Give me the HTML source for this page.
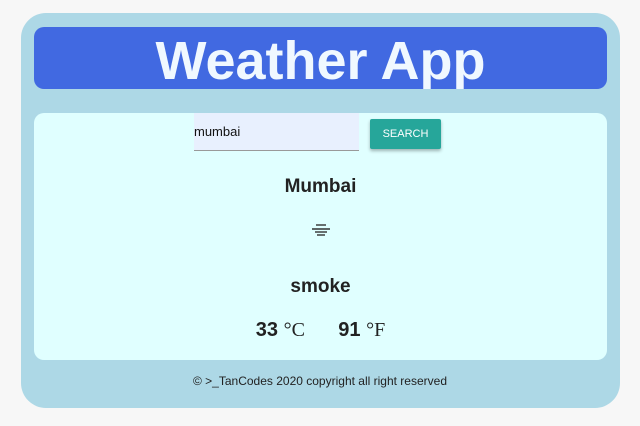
<html><head><style>
body{margin:0;background:#f7f7f7;width:640px;height:426px;position:relative;font-family:"Liberation Sans",sans-serif}
.o{position:absolute;left:21px;top:13px;width:599px;height:395px;background:#add8e6;border-radius:25px}
.h{position:absolute;left:34px;top:27px;width:573px;height:62px;background:#4169e1;border-radius:10px;color:#f0f8ff;font-weight:bold;font-size:54px;text-align:center;line-height:68px;overflow:hidden}
.c{position:absolute;left:34px;top:113px;width:573px;height:247px;background:#e0ffff;border-radius:10px}
.in{position:absolute;left:160px;top:0;width:165px;height:37px;background:#e8f0fe;border-bottom:1px solid #999;font-size:13px;line-height:38px;color:#111}
.b{position:absolute;left:336px;top:6px;width:71px;height:30px;background:#26a69a;color:#fff;font-size:11px;text-align:center;line-height:30px;box-shadow:0 2px 3px rgba(0,0,0,.3);border-radius:2px}
.t{position:absolute;left:0;width:573px;text-align:center;font-weight:bold;color:#222}
.s{font-family:"Liberation Serif",serif;font-weight:normal;font-size:20px}
.f{position:absolute;left:0;top:374px;width:640px;text-align:center;font-size:12px;color:#222}
</style></head><body>
<div class="o"></div>
<div class="h">Weather App</div>
<div class="c">
<div class="in">mumbai</div>
<div class="b">SEARCH</div>
<div class="t" style="top:63px;font-size:19px">Mumbai</div>
<div class="t" style="top:110px;font-size:18px">
<svg width="22" height="14" viewBox="0 0 22 14"><g stroke="#333" stroke-width="1.4"><line x1="6" y1="2" x2="16" y2="2"/><line x1="2" y1="6" x2="20" y2="6"/><line x1="5" y1="9" x2="17" y2="9"/><line x1="7" y1="12" x2="15" y2="12"/></g></svg></div>
<div class="t" style="top:163px;font-size:19px">smoke</div>
<div class="t" style="top:206px;font-size:20px">33 <span class="s">°C</span>&nbsp;&nbsp;&nbsp;&nbsp;&nbsp; 91 <span class="s">°F</span></div>
</div>
<div class="f">© &gt;_TanCodes 2020 copyright all right reserved</div>
</body></html>
